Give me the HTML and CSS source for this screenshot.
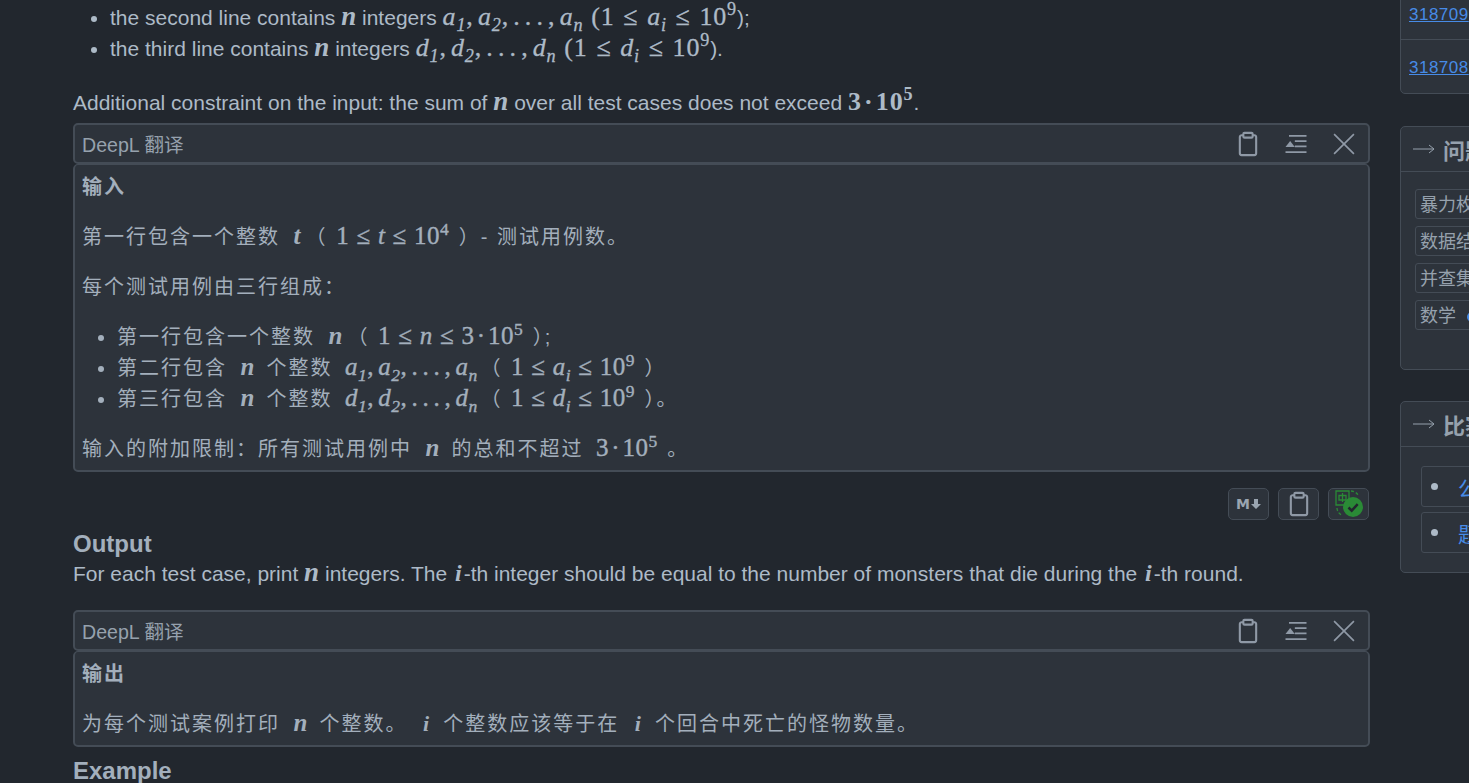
FILE: index.html
```html
<!DOCTYPE html>
<html lang="en">
<head>
    <meta charset="UTF-8">
    <meta name="viewport" content="width=device-width, initial-scale=1.0">
    <title>Problem statement</title>
    <link rel="stylesheet" href="styles.css">
</head>
<body>
    <div class="page">
        <main class="statement">
            <ul class="input-list">
                <li>the second line contains <span class="m b">n</span> integers <span class="m v">a<sub>1</sub><span class="r">,</span> a<sub>2</sub><span class="r">, . . . ,</span> a<sub>n</sub></span> <span class="r big">(1 ≤ <span class="m">a<sub>i</sub></span> ≤ 10<sup>9</sup></span>);</li>
                <li>the third line contains <span class="m b">n</span> integers <span class="m v">d<sub>1</sub><span class="r">,</span> d<sub>2</sub><span class="r">, . . . ,</span> d<sub>n</sub></span> <span class="r big">(1 ≤ <span class="m">d<sub>i</sub></span> ≤ 10<sup>9</sup></span>).</li>
            </ul>
            <p class="note">Additional constraint on the input: the sum of <span class="m b">n</span> over all test cases does not exceed <span class="r big bold">3 · 10<sup>5</sup></span>.</p>

            <section class="panel">
                <div class="panel-head">
                    <span class="panel-title">DeepL 翻译</span>
                    <div class="panel-tools">
                        <svg class="tool" viewBox="0 0 24 24"><path d="M8 4.500H6.500A1.500 1.500 0 0 0 5 6v14a1.500 1.500 0 0 0 1.500 1.500h11A1.500 1.500 0 0 0 19 20V6a1.500 1.500 0 0 0-1.500-1.500H16"/><rect x="8" y="2.500" width="8" height="4" rx="1"/></svg>
                        <svg class="tool thin" viewBox="0 0 24 24"><path d="M6 5h15M11 9.500h10M11 14h10M3 19h18"/><path class="solid" d="M3 14.500 7 9.500l4 5z"/></svg>
                        <svg class="tool thin" viewBox="0 0 24 24"><path d="M3.500 3.500l17 17M20.500 3.500l-17 17"/></svg>
                    </div>
                </div>
                <div class="panel-body">
                    <p class="cn-title">输入</p>
                    <p class="cn-line">第一行包含一个整数 <span class="m kb">t</span> <span class="paren">（</span> <span class="r k">1 ≤ <span class="m">t</span> ≤ 10<sup>4</sup></span> ）- 测试用例数。</p>
                    <p class="cn-line">每个测试用例由三行组成：</p>
                    <ul class="cn-list">
                        <li>第一行包含一个整数 <span class="m kb">n</span> <span class="paren">（</span> <span class="r k">1 ≤ <span class="m">n</span> ≤ <span class="tight">3 · 10<sup>5</sup></span></span> <span class="half">）</span>;</li>
                        <li>第二行包含 <span class="m kb">n</span> 个整数 <span class="m kl">a<sub>1</sub><span class="r">,</span> a<sub>2</sub><span class="r">, . . . ,</span> a<sub>n</sub></span> <span class="paren">（</span> <span class="r k">1 ≤ <span class="m">a<sub>i</sub></span> ≤ 10<sup>9</sup></span> ）</li>
                        <li>第三行包含 <span class="m kb">n</span> 个整数 <span class="m kl">d<sub>1</sub><span class="r">,</span> d<sub>2</sub><span class="r">, . . . ,</span> d<sub>n</sub></span> <span class="paren">（</span> <span class="r k">1 ≤ <span class="m">d<sub>i</sub></span> ≤ 10<sup>9</sup></span> ）。</li>
                    </ul>
                    <p class="cn-line">输入的附加限制：所有测试用例中 <span class="m kb">n</span> 的总和不超过 <span class="r k lead"><span class="tight">3 · 10<sup>5</sup></span></span> 。</p>
                </div>
            </section>

            <div class="actions">
                <button class="act-btn md-btn">M<svg class="md-arrow" viewBox="0 0 10 10"><path d="M3 0h4v5h3L5 10 0 5h3z"/></svg></button>
                <button class="act-btn">
                    <svg class="tool" viewBox="0 0 24 24"><path d="M8 4.500H6.500A1.500 1.500 0 0 0 5 6v14a1.500 1.500 0 0 0 1.500 1.500h11A1.500 1.500 0 0 0 19 20V6a1.500 1.500 0 0 0-1.500-1.500H16"/><rect x="8" y="2.500" width="8" height="4" rx="1"/></svg>
                </button>
                <button class="act-btn">
                    <svg class="tr-icon" viewBox="0 0 30 30"><path class="tr-line" d="M2 2h13v14H2zM5 6.500h7v4.500H5zM8.500 4v9"/><path class="tr-dash" d="M17 2c3 0 6 2 7 4M3 19c0 3 2 6 5 7"/><circle class="tr-dot" cx="19" cy="18" r="10"/><path class="tr-check" d="M14.500 18.500l3.200 3.200 6-6.500"/></svg>
                </button>
            </div>

            <h3 class="sec-title">Output</h3>
            <p class="out-text">For each test case, print <span class="m b">n</span> integers. The <span class="m b idx">i</span>-th integer should be equal to the number of monsters that die during the <span class="m b idx">i</span>-th round.</p>

            <section class="panel panel-out">
                <div class="panel-head">
                    <span class="panel-title">DeepL 翻译</span>
                    <div class="panel-tools">
                        <svg class="tool" viewBox="0 0 24 24"><path d="M8 4.500H6.500A1.500 1.500 0 0 0 5 6v14a1.500 1.500 0 0 0 1.500 1.500h11A1.500 1.500 0 0 0 19 20V6a1.500 1.500 0 0 0-1.500-1.500H16"/><rect x="8" y="2.500" width="8" height="4" rx="1"/></svg>
                        <svg class="tool thin" viewBox="0 0 24 24"><path d="M6 5h15M11 9.500h10M11 14h10M3 19h18"/><path class="solid" d="M3 14.500 7 9.500l4 5z"/></svg>
                        <svg class="tool thin" viewBox="0 0 24 24"><path d="M3.500 3.500l17 17M20.500 3.500l-17 17"/></svg>
                    </div>
                </div>
                <div class="panel-body">
                    <p class="cn-title">输出</p>
                    <p class="cn-line">为每个测试案例打印 <span class="m kb">n</span> 个整数。 <span class="m kb ki">i</span> 个整数应该等于在 <span class="m kb ki">i</span> 个回合中死亡的怪物数量。</p>
                </div>
            </section>

            <h3 class="sec-title example">Example</h3>
        </main>

        <aside class="sidebar">
            <div class="side-box runs">
                <div class="run-row"><a href="#">318709</a></div>
                <div class="run-row"><a href="#">318708</a></div>
            </div>
            <div class="side-box tags">
                <div class="side-head"><svg class="side-arrow" viewBox="0 0 22 10"><path d="M0 5h21M16 1l5 4-5 4"/></svg><b>问题标签</b></div>
                <div class="tag-list">
                    <span class="tag">暴力枚举算法标签</span>
                    <span class="tag">数据结构算法标签</span>
                    <span class="tag">并查集算法标签名</span>
                    <span class="tag">数学 <i class="tag-dot"></i> 算法标签名称</span>
                </div>
            </div>
            <div class="side-box contest">
                <div class="side-head"><svg class="side-arrow" viewBox="0 0 22 10"><path d="M0 5h21M16 1l5 4-5 4"/></svg><b>比赛资料</b></div>
                <div class="material-list">
                    <div class="material"><span class="dot"></span><a href="#">公告</a></div>
                    <div class="material"><span class="dot"></span><a href="#">题解</a></div>
                </div>
            </div>
        </aside>
    </div>
</body>
</html>
```

FILE: styles.css
```css
html, body {
    height: 783px;
    margin: 0;
    overflow: hidden;
    background-color: #22272e;
}

body {
    font-family: "Liberation Sans", "Noto Sans CJK SC", sans-serif;
    font-size: 21px;
    color: #adbac7;
}

.page {
    display: flex;
    align-items: flex-start;
    gap: 30px;
    padding-left: 73px;
}

.statement {
    flex: 0 0 1297px;
    width: 1297px;
    padding-top: 2px;
}

/* math */
.m, .r {
    font-family: "Liberation Serif", serif;
    line-height: 0;
}

.m {
    font-style: italic;
}

.r {
    font-style: normal;
}

.b {
    font-weight: bold;
    font-size: 27px;
}

.idx {
    margin: 0 2px;
    font-size: 24px;
}

.v, .big {
    font-size: 26px;
    letter-spacing: 0.8px;
    -webkit-text-stroke: 0.3px;
}

.v {
    margin-right: 2px;
    word-spacing: -3px;
}

.big {
    word-spacing: 1.500px;
}

.bold {
    font-weight: bold;
    word-spacing: -5px;
    -webkit-text-stroke: 0;
}

.k, .kb, .kl {
    font-size: 25px;
    letter-spacing: 0.5px;
}

.k {
    margin: 0 2px 0 1px;
    word-spacing: 0.500px;
    -webkit-text-stroke: 0.4px;
}

.tight {
    word-spacing: -4.500px;
}

.lead {
    margin-left: 5px;
}

.kb {
    margin: 0 4px 0 6px;
    font-weight: bold;
}

.ki {
    margin: 0 6px 0 8px;
    font-size: 22px;
}

.kl {
    margin: 0 2px 0 5px;
    word-spacing: -2.500px;
    -webkit-text-stroke: 0.4px;
}

.paren {
    margin-left: -7px;
}

.half {
    font-feature-settings: "halt";
}

sub, sup {
    font-size: 70%;
    line-height: 0;
}

.input-list {
    margin: 0;
    padding-left: 37px;
    line-height: 31px;
}

.note {
    margin: 23px 0 0;
    line-height: 31px;
}

.panel {
    margin-top: 5px;
}

.panel-head {
    display: flex;
    align-items: center;
    justify-content: space-between;
    height: 41px;
    box-sizing: border-box;
    padding: 0 10px 0 7px;
    background-color: #2d333b;
    border: 2px solid #444c56;
    border-radius: 5px;
}

.panel-title {
    font-size: 19.600px;
    color: #96a1ad;
}

.panel-tools {
    display: flex;
    gap: 20px;
}

.tool {
    display: block;
    width: 28px;
    height: 28px;
    fill: none;
    stroke: #8f99a6;
    stroke-width: 1.800;
}

.tool.thin {
    stroke-width: 1.400;
}

.solid {
    fill: #8f99a6;
    stroke: none;
}

.panel-body {
    box-sizing: border-box;
    height: 308px;
    padding: 7px 7px 0;
    font-size: 20px;
    letter-spacing: 2px;
    color: #a3afbc;
    background-color: #2d333b;
    border: 2px solid #444c56;
    border-top-width: 1px;
    border-radius: 5px;
}

.panel-body p {
    margin: 0;
    line-height: 31px;
}

.panel-body .cn-title {
    font-weight: bold;
}

.panel-body .cn-line {
    margin-top: 19px;
}

.cn-list {
    margin: 19px 0;
    padding-left: 35px;
    line-height: 31px;
}

.panel-out .panel-body {
    height: 96px;
}

.actions {
    display: flex;
    justify-content: flex-end;
    gap: 9px;
    margin-top: 16px;
    padding-right: 1px;
}

.act-btn {
    display: flex;
    align-items: center;
    justify-content: center;
    width: 41px;
    height: 32px;
    padding: 0;
    background-color: #2d333b;
    border: 1px solid #444c56;
    border-radius: 5px;
}

.md-btn {
    gap: 1px;
    color: #9aa5b1;
    font-family: "DejaVu Sans", sans-serif;
    font-weight: bold;
    font-size: 14px;
}

.md-arrow {
    width: 10px;
    height: 10px;
    fill: #9aa5b1;
}

.tr-icon {
    width: 30px;
    height: 30px;
    fill: none;
}

.tr-line, .tr-dash {
    stroke: #2a8a36;
    stroke-width: 1.300;
}

.tr-dash {
    stroke-dasharray: 3 2;
}

.tr-dot {
    fill: #2a8a36;
}

.tr-check {
    stroke: #22272e;
    stroke-width: 2.500;
}

.sec-title {
    margin: 8px 0 0;
    font-size: 24px;
    line-height: 31px;
    font-weight: bold;
    color: #a3afbc;
}

.out-text {
    margin: 0;
    line-height: 29px;
}

.panel-out {
    margin-top: 22px;
}

.example {
    margin-top: 8px;
}

.sidebar {
    flex: 0 0 300px;
    margin-top: -60px;
    display: flex;
    flex-direction: column;
}

.side-box {
    box-sizing: border-box;
    background-color: #2d333b;
    border: 1px solid #444c56;
    border-radius: 5px;
}

.runs {
    height: 154px;
    padding-top: 47px;
}

.run-row {
    height: 53px;
    padding-left: 8px;
    line-height: 56px;
    font-size: 17px;
    letter-spacing: 0.500px;
}

.run-row:first-child {
    box-sizing: border-box;
    height: 52px;
    line-height: 53px;
    border-bottom: 1px solid #444c56;
}

.run-row a, .material a {
    color: #478be6;
}

.material a {
    text-decoration: none;
}

.tags {
    height: 244px;
    margin-top: 32px;
}

.contest {
    height: 172px;
    margin-top: 31px;
}

.side-head {
    display: flex;
    align-items: center;
    gap: 8px;
    box-sizing: border-box;
    height: 45px;
    padding: 0 0 0 12px;
    font-size: 22px;
    color: #96a1ad;
    border-bottom: 1px solid #444c56;
    white-space: nowrap;
}

.side-arrow {
    flex: 0 0 22px;
    width: 22px;
    height: 10px;
    fill: none;
    stroke: #96a1ad;
    stroke-width: 1;
}

.tag-list {
    display: flex;
    flex-direction: column;
    align-items: flex-start;
    gap: 7px;
    padding: 17px 0 0 14px;
}

.tag {
    height: 30px;
    box-sizing: border-box;
    padding: 1px 4px 0;
    line-height: 29px;
    font-size: 18px;
    white-space: nowrap;
    color: #96a1ad;
    border: 1px solid #444c56;
    border-radius: 3px;
}

.tag-dot {
    display: inline-block;
    width: 10px;
    height: 10px;
    margin-left: 6px;
    border-radius: 50%;
    background-color: #478be6;
}

.material-list {
    display: flex;
    flex-direction: column;
    gap: 5px;
    padding: 19px 0 0 20px;
}

.material {
    display: flex;
    align-items: center;
    gap: 20px;
    box-sizing: border-box;
    height: 41px;
    padding-left: 9px;
    border: 1px solid #444c56;
    border-radius: 3px;
    white-space: nowrap;
}

.dot {
    width: 7px;
    height: 7px;
    border-radius: 50%;
    background-color: #adbac7;
}
```
